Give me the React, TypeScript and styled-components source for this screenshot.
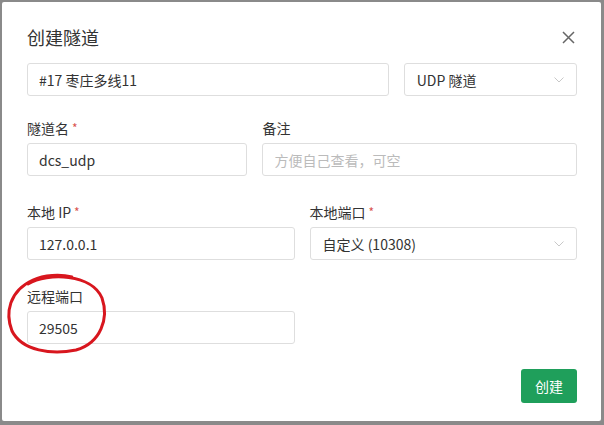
import React from 'react'
import styled, { createGlobalStyle } from 'styled-components'

const GlobalStyle = createGlobalStyle`
    html, body {
        margin: 0;
        padding: 0;
        background: #8a8a8a;
    }
    * {
        box-sizing: border-box;
    }
`

const Page = styled.div`
    position: relative;
    width: 604px;
    height: 425px;
    padding: 2px 3px 4px 2px;
    font-family: 'Noto Sans CJK SC', 'Noto Sans', sans-serif;
    color: #333;
`

const Dialog = styled.div`
    height: 100%;
    background: #fff;
    border-radius: 2px;
    padding: 20px 24px 0 25px;
`

const Header = styled.div`
    display: flex;
    align-items: center;
    justify-content: space-between;
    height: 30px;
    margin-bottom: 11px;
`

const Title = styled.h4`
    margin: 0;
    font-size: 18px;
    font-weight: 400;
    line-height: 30px;
    color: #333;
`

const CloseButton = styled.button`
    display: flex;
    padding: 0;
    margin-right: 2px;
    border: none;
    background: none;
    cursor: pointer;
`

const Row = styled.div<{ $mb: number }>`
    display: grid;
    grid-template-columns: repeat(12, 1fr);
    column-gap: 15px;
    margin-bottom: ${({ $mb }) => $mb}px;
`

const Field = styled.div<{ $span: number }>`
    grid-column: span ${({ $span }) => $span};
    display: flex;
    flex-direction: column;
`

const Label = styled.label`
    height: 20px;
    line-height: 20px;
    margin-bottom: 5px;
    font-size: 14px;
    color: #333;
`

const Required = styled.span`
    color: #d9534f;
    margin-left: 3px;
    font-size: 12px;
    vertical-align: top;
`

const TextInput = styled.input`
    width: 100%;
    height: 33px;
    padding: 0 11px;
    border: 1px solid #dedede;
    border-radius: 3px;
    font-family: inherit;
    font-size: 14px;
    color: #333;
    outline: none;

    &::placeholder {
        color: #bbb;
    }
`

const SelectBox = styled.div`
    display: flex;
    align-items: center;
    justify-content: space-between;
    height: 33px;
    padding: 0 12px 0 12px;
    border: 1px solid #dedede;
    border-radius: 3px;
    font-size: 14px;
    color: #333;
`

const Footer = styled.div`
    display: flex;
    justify-content: flex-end;
`

const PrimaryButton = styled.button`
    width: 56px;
    height: 34px;
    border: none;
    border-radius: 3px;
    background: #1f9f5b;
    color: #fff;
    font-family: inherit;
    font-size: 14px;
    cursor: pointer;
`

const Annotation = styled.svg`
    position: absolute;
    left: 0;
    top: 0;
    pointer-events: none;
`

const Chevron = () => (
    <svg width="10" height="6" viewBox="0 0 10 6">
        <path d="M0.5 0.5 L5 5 L9.5 0.5" fill="none" stroke="#c8c8c8" strokeWidth="1" />
    </svg>
)

const Select = ({ value }: { value: string }) => (
    <SelectBox>
        <span>{value}</span>
        <Chevron />
    </SelectBox>
)

export default function App() {
    return (
        <>
            <GlobalStyle />
            <Page>
                <Dialog>
                    <Header>
                        <Title>创建隧道</Title>
                        <CloseButton>
                            <svg width="13" height="13" viewBox="0 0 13 13">
                                <path d="M1 1 L12 12 M12 1 L1 12" stroke="#666" strokeWidth="1.5" />
                            </svg>
                        </CloseButton>
                    </Header>

                    <Row $mb={22}>
                        <Field $span={8}>
                            <TextInput defaultValue="#17 枣庄多线11" />
                        </Field>
                        <Field $span={4}>
                            <Select value="UDP 隧道" />
                        </Field>
                    </Row>

                    <Row $mb={26}>
                        <Field $span={5}>
                            <Label>
                                隧道名<Required>*</Required>
                            </Label>
                            <TextInput defaultValue="dcs_udp" />
                        </Field>
                        <Field $span={7}>
                            <Label>备注</Label>
                            <TextInput placeholder="方便自己查看，可空" />
                        </Field>
                    </Row>

                    <Row $mb={26}>
                        <Field $span={6}>
                            <Label>
                                本地 IP<Required>*</Required>
                            </Label>
                            <TextInput defaultValue="127.0.0.1" />
                        </Field>
                        <Field $span={6}>
                            <Label>
                                本地端口<Required>*</Required>
                            </Label>
                            <Select value="自定义 (10308)" />
                        </Field>
                    </Row>

                    <Row $mb={25}>
                        <Field $span={6}>
                            <Label>远程端口</Label>
                            <TextInput defaultValue="29505" />
                        </Field>
                    </Row>

                    <Footer>
                        <PrimaryButton>创建</PrimaryButton>
                    </Footer>
                </Dialog>

                {/* hand-drawn red circle around the remote port field */}
                <Annotation width="604" height="425" viewBox="0 0 604 425">
                    <path
                        d="M28 284 C48 272 92 274 102 298 C109 318 101 343 76 350 C52 355 22 351 12 331 C5 313 9 291 33 280 C44 275 60 274 72 277"
                        fill="none"
                        stroke="#d8161e"
                        strokeWidth="3"
                        strokeLinecap="round"
                    />
                </Annotation>
            </Page>
        </>
    )
}
